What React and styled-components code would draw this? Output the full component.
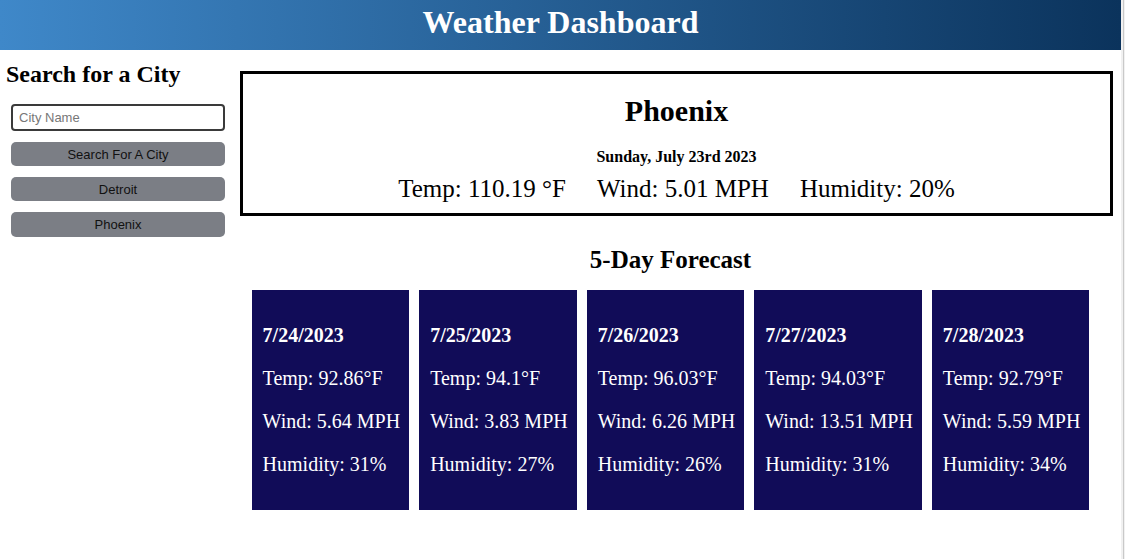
import React from 'react'
import styled, { createGlobalStyle } from 'styled-components'

const Global = createGlobalStyle`
  html, body {
    margin: 0;
    min-height: 100%;
  }
  body {
    font-family: "Liberation Serif", "Times New Roman", serif;
    background: linear-gradient(to right, #f1f1f1 0, #f1f1f1 2px, #c9c9c9 2px, #c9c9c9 3px, #f1f1f1 3px) right top / 4px 100% no-repeat, #fff;
  }
`

const Page = styled.div`
  width: calc(100% - 4px);
  min-height: 559px;
  background: #fff;
`

const Header = styled.header`
  height: 50px;
  box-sizing: border-box;
  padding-bottom: 5px;
  display: flex;
  align-items: center;
  justify-content: center;
  background: linear-gradient(to right, #3f88c9, #0b335c);
  color: #fff;
`

const Title = styled.h1`
  margin: 0;
  font-size: 32px;
  font-weight: bold;
`

const Body = styled.div`
  display: flex;
  align-items: flex-start;
`

const Sidebar = styled.aside`
  width: 234px;
  flex: none;
  padding: 0 0 0 6px;
  box-sizing: border-box;
`

const SideHeading = styled.h2`
  margin: 10px 0 16px;
  font-size: 24px;
  line-height: 28px;
  font-weight: bold;
`

const SearchForm = styled.div`
  display: flex;
  flex-direction: column;
  gap: 11px;
  padding: 0 9px 0 5px;
`

const CityInput = styled.input`
  height: 27px;
  box-sizing: border-box;
  border: 2px solid #3a3a3a;
  border-radius: 4px;
  padding: 0 6px;
  font-family: "Liberation Sans", Arial, sans-serif;
  font-size: 13px;
  &::placeholder { color: #777; }
`

const CityButton = styled.button`
  height: ${p => (p.tall ? 25 : 24)}px;
  border: 0;
  border-radius: 5px;
  background: #7b7e85;
  color: #111;
  font-family: "Liberation Sans", Arial, sans-serif;
  font-size: 13px;
  padding: 0;
`

const Main = styled.main`
  flex: 1;
  margin: 21px 8px 0 6px;
`

const CurrentBox = styled.section`
  border: 3px solid #000;
  height: 145px;
  box-sizing: border-box;
  display: flex;
  flex-direction: column;
  align-items: center;
  padding-top: 20px;
`

const CityName = styled.h2`
  margin: 0;
  font-size: 30px;
  line-height: 34px;
  font-weight: bold;
`

const DateLine = styled.h4`
  margin: 20px 0 0;
  font-size: 16px;
  line-height: 18px;
  font-weight: bold;
`

const Stats = styled.div`
  display: flex;
  gap: 31px;
  margin-top: 8px;
  font-size: 25px;
  line-height: 30px;
`

const Forecast = styled.section`
  margin-top: 29px;
  padding-right: 12px;
`

const ForecastTitle = styled.h2`
  margin: 0 0 15px;
  text-align: center;
  font-size: 25px;
  line-height: 30px;
  font-weight: bold;
`

const Cards = styled.div`
  display: flex;
  justify-content: center;
  gap: 10px;
`

const Card = styled.div`
  background: #110c58;
  color: #fff;
  height: 220px;
  box-sizing: border-box;
  padding: 14px 9px 0 11px;
`

const CardLine = styled.p`
  margin: 20px 0;
  font-size: 20px;
  line-height: 23px;
  font-weight: ${p => (p.bold ? 'bold' : 'normal')};
  white-space: nowrap;
`

const forecast = [
  { date: '7/24/2023', temp: '92.86', wind: '5.64', humidity: 31 },
  { date: '7/25/2023', temp: '94.1', wind: '3.83', humidity: 27 },
  { date: '7/26/2023', temp: '96.03', wind: '6.26', humidity: 26 },
  { date: '7/27/2023', temp: '94.03', wind: '13.51', humidity: 31 },
  { date: '7/28/2023', temp: '92.79', wind: '5.59', humidity: 34 },
]

export default function App() {
  return (
    <Page>
      <Global />
      <Header>
        <Title>Weather Dashboard</Title>
      </Header>
      <Body>
        <Sidebar>
          <SideHeading>Search for a City</SideHeading>
          <SearchForm>
            <CityInput placeholder="City Name" />
            <CityButton>Search For A City</CityButton>
            <CityButton>Detroit</CityButton>
            <CityButton tall>Phoenix</CityButton>
          </SearchForm>
        </Sidebar>
        <Main>
          <CurrentBox>
            <CityName>Phoenix</CityName>
            <DateLine>Sunday, July 23rd 2023</DateLine>
            <Stats>
              <span>Temp: 110.19 °F</span>
              <span>Wind: 5.01 MPH</span>
              <span>Humidity: 20%</span>
            </Stats>
          </CurrentBox>
          <Forecast>
            <ForecastTitle>5-Day Forecast</ForecastTitle>
            <Cards>
              {forecast.map(day => (
                <Card key={day.date}>
                  <CardLine bold>{day.date}</CardLine>
                  <CardLine>Temp: {day.temp}°F</CardLine>
                  <CardLine>Wind: {day.wind} MPH</CardLine>
                  <CardLine>Humidity: {day.humidity}%</CardLine>
                </Card>
              ))}
            </Cards>
          </Forecast>
        </Main>
      </Body>
    </Page>
  )
}
